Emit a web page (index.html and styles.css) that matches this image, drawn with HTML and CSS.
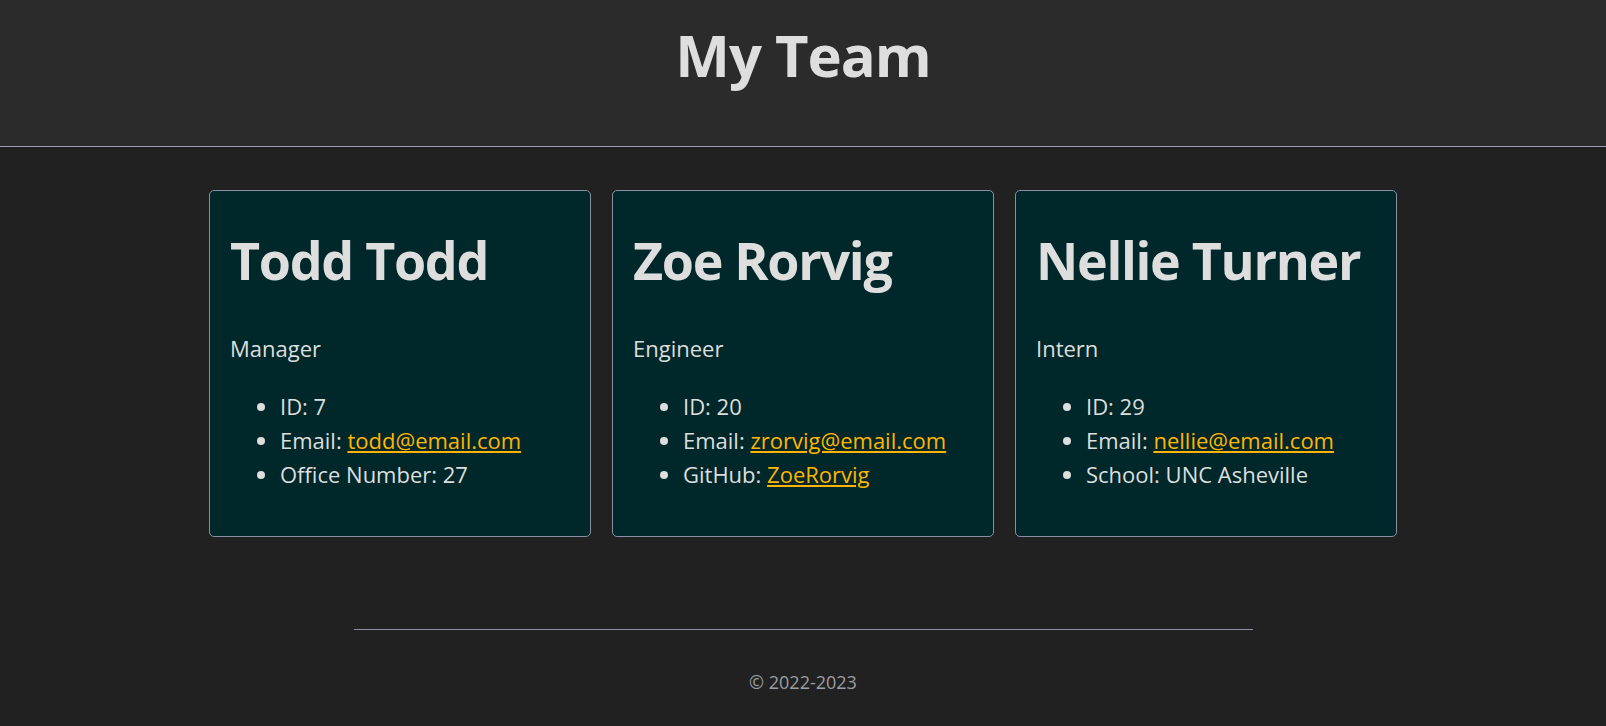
FILE: index.html
```html
<!DOCTYPE html>
<html lang="en">
<head>
<meta charset="utf-8">
<title>My Team</title>
<link rel="stylesheet" href="styles.css">
</head>
<body>
<header class="site-header">
  <h1 class="site-title">My Team</h1>
</header>
<main class="team">
  <section class="card">
    <h2 class="card-name">Todd Todd</h2>
    <p class="card-role">Manager</p>
    <ul class="card-list">
      <li>ID: 7</li>
      <li>Email: <a href="#">todd@email.com</a></li>
      <li>Office Number: 27</li>
    </ul>
  </section>
  <section class="card">
    <h2 class="card-name">Zoe Rorvig</h2>
    <p class="card-role">Engineer</p>
    <ul class="card-list">
      <li>ID: 20</li>
      <li>Email: <a href="#">zrorvig@email.com</a></li>
      <li>GitHub: <a href="#">ZoeRorvig</a></li>
    </ul>
  </section>
  <section class="card">
    <h2 class="card-name">Nellie Turner</h2>
    <p class="card-role">Intern</p>
    <ul class="card-list">
      <li>ID: 29</li>
      <li>Email: <a href="#">nellie@email.com</a></li>
      <li>School: UNC Asheville</li>
    </ul>
  </section>
</main>
<footer class="site-footer">
  <hr class="footer-rule">
  <p class="copyright">© 2022-2023</p>
</footer>
</body>
</html>
```
FILE: styles.css
```css
* { box-sizing: border-box; }

body {
  margin: 0;
  background: #212121;
  color: #dedede;
  font-family: "Open Sans", "Noto Sans", sans-serif;
}

.site-header {
  background: #2b2b2b;
  border-bottom: 1px solid #9b9bb4;
  padding: 20px 0 56px;
  text-align: center;
}

.site-title {
  margin: 0;
  font-size: 58px;
  line-height: 1.2;
  font-weight: 700;
  letter-spacing: -1px;
  color: #dedede;
}

.team {
  width: 1188px;
  margin: 43px auto 0;
  display: flex;
  gap: 21px;
}

.card {
  flex: 1;
  min-width: 0;
  background: #00282a;
  border: 1px solid #8b8fa0;
  border-radius: 5px;
  padding: 22px 20px;
}

.card-name {
  margin: 16px 0 0;
  font-size: 52px;
  line-height: 1.2;
  font-weight: 700;
  letter-spacing: -1.3px;
  white-space: nowrap;
  color: #dedede;
}

.card-role {
  margin: 41px 0 0;
  font-size: 22px;
  line-height: 33px;
}

.card-list {
  margin: 24px 0 23px;
  padding-left: 50px;
  font-size: 22px;
  line-height: 34px;
}

.card-list a {
  color: #ffb400;
}

.site-footer {
  padding-top: 92px;
  text-align: center;
}

.footer-rule {
  width: 899px;
  margin: 0 auto;
  border: 0;
  border-top: 1px solid #8b8fa0;
}

.copyright {
  margin: 39px 0 0;
  font-size: 18px;
  line-height: 27px;
  color: #9a9ea4;
}
```
